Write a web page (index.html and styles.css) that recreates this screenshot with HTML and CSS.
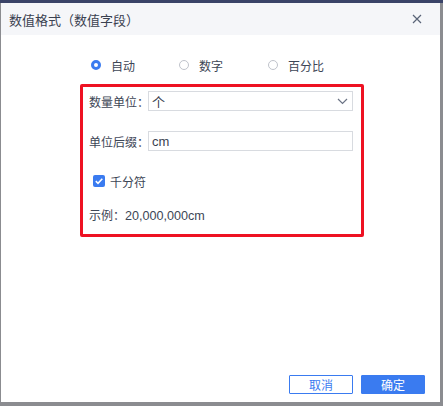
FILE: index.html
```html
<!DOCTYPE html>
<html lang="zh">
<head>
<meta charset="utf-8">
<title>数值格式</title>
<link rel="stylesheet" href="styles.css">
</head>
<body>
<div class="dialog">
  <div class="header">
    <span class="title">数值格式（数值字段）</span>
    <svg class="close" width="10" height="10" viewBox="0 0 10 10"><path d="M1 1L9 9M9 1L1 9" stroke="#5a6478" stroke-width="1.2" fill="none"/></svg>
  </div>
  <div class="content">
    <div class="radios">
      <label class="radio"><span class="dot on"></span><span>自动</span></label>
      <label class="radio"><span class="dot"></span><span>数字</span></label>
      <label class="radio"><span class="dot"></span><span>百分比</span></label>
    </div>
    <div class="box">
      <div class="row">
        <span class="label">数量单位：</span>
        <div class="field select"><span>个</span>
          <svg width="11" height="7" viewBox="0 0 11 7"><path d="M1 1L5.5 5.5L10 1" stroke="#6b7385" stroke-width="1.2" fill="none"/></svg>
        </div>
      </div>
      <div class="row">
        <span class="label">单位后缀：</span>
        <div class="field"><span>cm</span></div>
      </div>
      <div class="check-row">
        <span class="check"><svg width="12" height="12" viewBox="0 0 12 12"><path d="M2.8 6.2L5 8.3L9.3 3.8" stroke="#fff" stroke-width="1.6" fill="none"/></svg></span>
        <span>千分符</span>
      </div>
      <div class="example">示例：<span class="num">20,000,000cm</span></div>
    </div>
  </div>
  <div class="footer">
    <button class="btn ghost">取消</button>
    <button class="btn primary">确定</button>
  </div>
</div>
</body>
</html>
```
FILE: styles.css
```css
html, body { margin: 0; padding: 0; }
body {
  width: 443px;
  height: 406px;
  overflow: hidden;
  background: linear-gradient(#3a4368 0, #3a4368 3px, #8b8c90 3px);
  font-family: "Liberation Sans", "Noto Sans CJK SC", sans-serif;
  color: #3d4656;
}
.dialog {
  margin: 3px 0 0 1px;
  width: 439px;
  height: 399px;
  background: #fff;
  display: flex;
  flex-direction: column;
}
.header {
  height: 32px;
  flex: none;
  background: #f5f6f9;
  display: flex;
  align-items: center;
  justify-content: space-between;
  padding: 0 18px 0 8px;
}
.title { font-size: 13px; color: #3a4150; }
.close { display: block; }
.content {
  flex: 1;
  padding: 21px 0 0 79px;
}
.radios {
  display: flex;
  height: 18px;
  align-items: center;
  padding-left: 11px;
  font-size: 12px;
}
.radio { display: flex; align-items: center; gap: 10px; margin-right: 44px; }
.radio:nth-child(2) { margin-right: 45px; }
.dot {
  width: 10px;
  height: 10px;
  box-sizing: border-box;
  border: 1px solid #bfc3cb;
  border-radius: 50%;
  background: #fff;
}
.dot.on { border: 3px solid #3a7bf0; }
.box {
  box-sizing: border-box;
  margin-top: 10px;
  width: 284px;
  height: 153px;
  border: 3px solid #ee1122;
  border-radius: 2px;
  padding: 4px 8px 0 6px;
  font-size: 12px;
}
.row { display: flex; align-items: center; height: 20px; margin-bottom: 20px; }
.label { width: 59px; flex: none; white-space: nowrap; }
.field {
  flex: 1;
  height: 20px;
  box-sizing: border-box;
  border: 1px solid #d8dbe0;
  display: flex;
  align-items: center;
  justify-content: space-between;
  padding: 0 4px 0 3px;
  font-size: 13px;
  color: #3a4150;
}
.select svg { display: block; }
.check-row {
  display: flex;
  align-items: center;
  gap: 5px;
  padding-left: 4px;
  height: 20px;
}
.check {
  width: 12px;
  height: 12px;
  border-radius: 2px;
  background: #3a7bf0;
  display: flex;
}
.example { margin-top: 15px; height: 20px; line-height: 20px; }
.num { font-size: 12.6px; }
.footer {
  display: flex;
  justify-content: flex-end;
  gap: 8px;
  padding: 0 15px 8px 0;
}
.btn {
  width: 64px;
  height: 19px;
  box-sizing: border-box;
  font-family: inherit;
  font-size: 12px;
  padding: 0;
  border-radius: 1px;
}
.ghost { background: #fff; border: 1px solid #3a7bf0; color: #3a7bf0; }
.primary { background: #3a7bf0; border: 1px solid #3a7bf0; color: #fff; }
```
